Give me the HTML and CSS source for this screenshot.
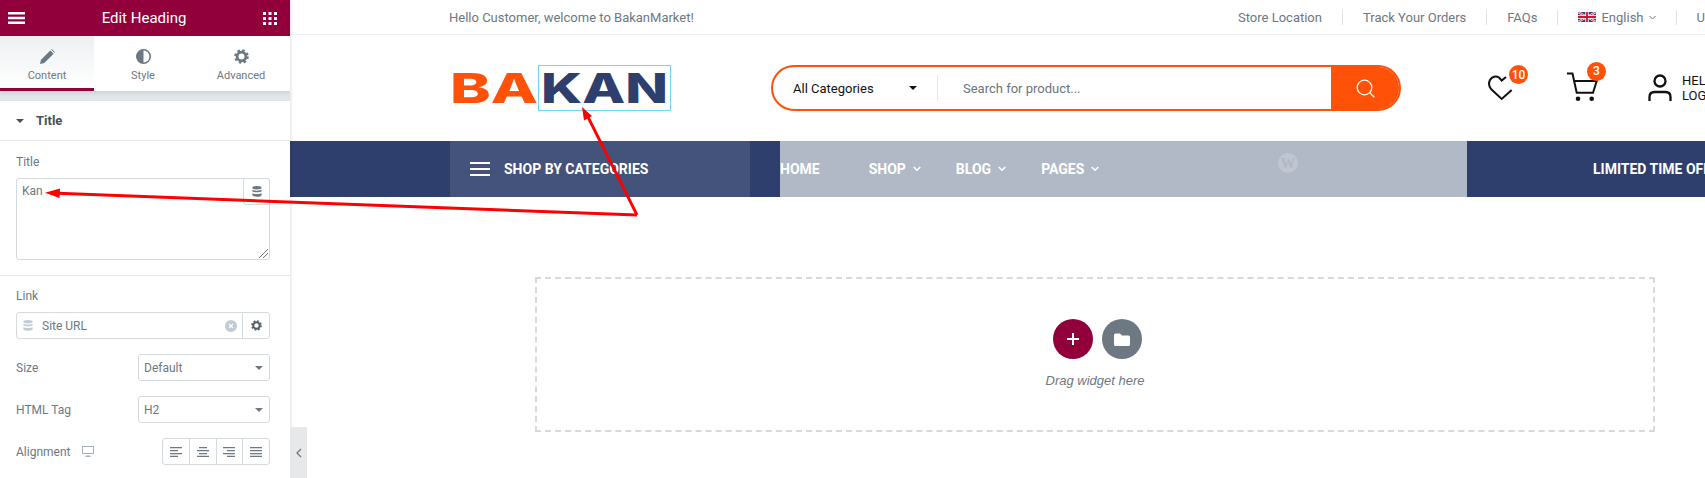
FILE: index.html
```html
<!DOCTYPE html>
<html lang="en">
<head>
  <meta charset="UTF-8" />
  <meta name="viewport" content="width=device-width, initial-scale=1" />
  <title>Edit Heading</title>
  <link rel="stylesheet" href="styles.css">
</head>
<body>

  <aside class="panel">
    <div class="panel-head">
      <svg class="head-icon" width="17" height="12" viewBox="0 0 17 12"><path d="M0 0h17v2.4H0zM0 4.8h17v2.4H0zM0 9.6h17V12H0z" fill="#fff"/></svg>
      <span>Edit Heading</span>
      <svg class="head-icon" width="14" height="13" viewBox="0 0 14 13" fill="#fff"><path d="M0 0h3v3H0zM5.5 0h3v3h-3zM11 0h3v3h-3zM0 5h3v3H0zM5.5 5h3v3h-3zM11 5h3v3h-3zM0 10h3v3H0zM5.5 10h3v3h-3zM11 10h3v3h-3z"/></svg>
    </div>

    <div class="tabs">
      <div class="tab active">
        <svg width="15" height="15" viewBox="0 0 15 15" fill="#6d7882"><path d="M0 15l1-4.3L10.3 1.4l3.3 3.3L4.3 14zM11.2.6l.6-.6 3.2 3.2-.6.6z"/></svg>
        <span>Content</span>
      </div>
      <div class="tab">
        <svg width="15" height="15" viewBox="0 0 15 15"><circle cx="7.5" cy="7.5" r="6.7" fill="#fff" stroke="#6d7882" stroke-width="1.6"/><path d="M7.5.8a6.7 6.7 0 0 0 0 13.4z" fill="#6d7882"/></svg>
        <span>Style</span>
      </div>
      <div class="tab">
        <svg width="15" height="15" viewBox="0 0 15 15"><circle cx="7.5" cy="7.5" r="4.4" fill="none" stroke="#6d7882" stroke-width="2.8"/><circle cx="7.5" cy="7.5" r="6" fill="none" stroke="#6d7882" stroke-width="2.6" stroke-dasharray="2.4 2.31"/></svg>
        <span>Advanced</span>
      </div>
    </div>
    <div class="band"></div>

    <div class="section-title"><i class="caret"></i>Title</div>

    <div class="group">
      <label class="field-label">Title</label>
      <div class="textarea">
        <span>Kan</span>
        <div class="dyn">
          <svg width="10" height="11" viewBox="0 0 10 11" fill="#6d7882"><ellipse cx="5" cy="1.7" rx="4.6" ry="1.7"/><path d="M.4 3.6C1.5 5 8.5 5 9.6 3.6v1.7C8.5 6.7 1.5 6.7.4 5.3zM.4 7c1.1 1.4 8.1 1.4 9.2 0v2.2c-1.1 2.1-8.1 2.1-9.2 0z"/></svg>
        </div>
        <svg class="grip" width="9" height="9" viewBox="0 0 9 9" stroke="#6d7882" stroke-width="1"><path d="M0 9L9 0M4 9l5-5"/></svg>
      </div>
    </div>

    <div class="group group-link">
      <label class="field-label">Link</label>
      <div class="url">
        <svg width="10" height="11" viewBox="0 0 10 11" fill="#c2cbd2"><ellipse cx="5" cy="1.7" rx="4.6" ry="1.7"/><path d="M.4 3.6C1.5 5 8.5 5 9.6 3.6v1.7C8.5 6.7 1.5 6.7.4 5.3zM.4 7c1.1 1.4 8.1 1.4 9.2 0v2.2c-1.1 2.1-8.1 2.1-9.2 0z"/></svg>
        <span class="url-text">Site URL</span>
        <svg width="12" height="12" viewBox="0 0 12 12"><circle cx="6" cy="6" r="6" fill="#c2cbd2"/><path d="M4 4l4 4M8 4l-4 4" stroke="#fff" stroke-width="1.2"/></svg>
        <div class="url-gear">
          <svg width="11" height="11" viewBox="0 0 15 15"><circle cx="7.5" cy="7.5" r="4.4" fill="none" stroke="#556068" stroke-width="2.8"/><circle cx="7.5" cy="7.5" r="6" fill="none" stroke="#556068" stroke-width="2.6" stroke-dasharray="2.4 2.31"/></svg>
        </div>
      </div>

      <div class="row">
        <span class="field-name">Size</span>
        <div class="select">Default<i class="caret"></i></div>
      </div>
      <div class="row">
        <span class="field-name">HTML Tag</span>
        <div class="select">H2<i class="caret"></i></div>
      </div>
      <div class="row">
        <span class="field-name">Alignment
          <svg class="device" width="12" height="11" viewBox="0 0 12 11" fill="#a4afb7"><path d="M0 0h12v8H0zM1 1v6h10V1zM3.5 9.5h5V11h-5z" fill-rule="evenodd"/></svg>
        </span>
        <div class="aligns">
          <div class="align"><svg width="12" height="10" viewBox="0 0 12 10" fill="#6d7882"><path d="M0 0h12v1.2H0zM0 3h8v1.2H0zM0 6h12v1.2H0zM0 8.8h8V10H0z"/></svg></div>
          <div class="align"><svg width="12" height="10" viewBox="0 0 12 10" fill="#6d7882"><path d="M0 8.8h12V10H0zM2 6h8v1.2H2zM0 3h12v1.2H0zM2 0h8v1.2H2z"/></svg></div>
          <div class="align"><svg width="12" height="10" viewBox="0 0 12 10" fill="#6d7882"><path d="M0 0h12v1.2H0zM4 3h8v1.2H4zM0 6h12v1.2H0zM4 8.8h8V10H4z"/></svg></div>
          <div class="align"><svg width="12" height="10" viewBox="0 0 12 10" fill="#6d7882"><path d="M0 0h12v1.2H0zM0 3h12v1.2H0zM0 6h12v1.2H0zM0 8.8h12V10H0z"/></svg></div>
        </div>
      </div>
    </div>
  </aside>

  <main class="site">
    <div class="topbar">
      <span class="welcome">Hello Customer, welcome to BakanMarket!</span>
      <div class="top-links">
        <a>Store Location</a>
        <a>Track Your Orders</a>
        <a>FAQs</a>
        <a class="lang">
          <svg width="18" height="10" viewBox="0 0 18 10">
            <rect width="18" height="10" fill="#2b3f87"/>
            <path d="M0 0l18 10M18 0L0 10" stroke="#fff" stroke-width="2"/>
            <path d="M0 0l18 10M18 0L0 10" stroke="#cf142b" stroke-width=".8"/>
            <path d="M9 0v10M0 5h18" stroke="#fff" stroke-width="3.4"/>
            <path d="M9 0v10M0 5h18" stroke="#cf142b" stroke-width="1.8"/>
          </svg>
          English
          <svg width="7" height="5" viewBox="0 0 7 5" fill="none" stroke="#6d7882"><path d="M.5 1l3 3 3-3"/></svg>
        </a>
        <a>USD</a>
      </div>
    </div>

    <header class="header">
      <svg class="logo" width="222" height="46" viewBox="0 0 222 46">
        <text x="-2" y="38" class="logo-text logo-ba" textLength="88" lengthAdjust="spacingAndGlyphs">BA</text>
        <text x="89" y="38" class="logo-text logo-kan" textLength="127" lengthAdjust="spacingAndGlyphs">KAN</text>
        <rect x="86.5" y=".5" width="132" height="45" fill="none" stroke="#71d7f7"/>
      </svg>

      <div class="search">
        <div class="search-cat">All Categories<i class="caret caret-dark"></i></div>
        <div class="search-input">Search for product...</div>
        <div class="search-btn">
          <svg width="19" height="19" viewBox="0 0 19 19" fill="none" stroke="#fff" stroke-width="1.3"><circle cx="8.5" cy="8.5" r="7.3"/><path d="M13.8 13.8l4.5 4.5"/></svg>
        </div>
      </div>

      <div class="actions">
        <div class="action action-heart">
          <svg width="26" height="26" viewBox="0 0 26 26" fill="none" stroke="#111" stroke-width="2"><path d="M18 2l-4.3 3.5L11 2.5C8 .5 4 1.5 2 5 .5 8 1 11.5 3 14l10.7 10 10-9"/></svg>
          <span class="badge">10</span>
        </div>
        <div class="action action-cart">
          <svg width="31" height="30" viewBox="0 0 31 30" fill="none" stroke="#111" stroke-width="2"><path d="M0 2.5h5.5L9.700 21.700H26L29.700 10H7.500"/><circle cx="11" cy="27.700" r="2.300" fill="#111" stroke="none"/><circle cx="24.700" cy="27.700" r="2.300" fill="#111" stroke="none"/></svg>
          <span class="badge">3</span>
        </div>
        <div class="action action-user">
          <svg width="24" height="28" viewBox="0 0 24 28" fill="none" stroke="#111" stroke-width="2.3"><circle cx="12" cy="7" r="5.5"/><path d="M1.500 27v-4c0-3 2-5 5-5h11c3 0 5 2 5 5v4"/></svg>
          <div class="user-text">HELLO<br>LOG IN</div>
        </div>
      </div>
    </header>

    <nav class="nav">
      <div class="nav-cats">
        <svg width="20" height="14" viewBox="0 0 20 14" fill="#fff"><path d="M0 0h20v2H0zM0 6h20v2H0zM0 12h20v2H0z"/></svg>
        SHOP BY CATEGORIES
      </div>
      <div class="nav-menu">
        <a class="nav-home">HOME</a>
        <a>SHOP<svg width="8" height="6" viewBox="0 0 8 6" fill="none" stroke="#fff" stroke-width="1.5"><path d="M.7 1L4 4.300 7.300 1"/></svg></a>
        <a>BLOG<svg width="8" height="6" viewBox="0 0 8 6" fill="none" stroke="#fff" stroke-width="1.5"><path d="M.7 1L4 4.300 7.300 1"/></svg></a>
        <a>PAGES<svg width="8" height="6" viewBox="0 0 8 6" fill="none" stroke="#fff" stroke-width="1.5"><path d="M.7 1L4 4.300 7.300 1"/></svg></a>
        <span class="wp-mark">W</span>
      </div>
      <div class="nav-promo">LIMITED TIME OFFER</div>
    </nav>

    <section class="drop">
      <div class="drop-buttons">
        <div class="drop-btn drop-add">
          <svg width="12" height="12" viewBox="0 0 12 12"><path d="M6 0v12M0 6h12" stroke="#fff" stroke-width="2"/></svg>
        </div>
        <div class="drop-btn drop-lib">
          <svg width="16" height="13" viewBox="0 0 16 13" fill="#fff"><path d="M0 2A1.500 1.500 0 0 1 1.500.5H6l2 2h6.500A1.500 1.500 0 0 1 16 4v7.500a1.500 1.500 0 0 1-1.500 1.500h-13A1.500 1.500 0 0 1 0 11.500z"/></svg>
        </div>
      </div>
      <p class="drop-text">Drag widget here</p>
    </section>
  </main>

  <div class="collapse">
    <svg width="6" height="10" viewBox="0 0 6 10" fill="none" stroke="#6d7882" stroke-width="1.3"><path d="M5 1L1 5l4 4"/></svg>
  </div>

  <svg class="arrows" width="1705" height="478" viewBox="0 0 1705 478">
    <path d="M637 215L58 193.300" fill="none" stroke="#f00" stroke-width="3"/>
    <path d="M45 192.700L60 188.500l-.5 9.500z" fill="#f00"/>
    <path d="M637 215L588 117" fill="none" stroke="#f00" stroke-width="2.800"/>
    <path d="M582 107l10 9-8 4.500z" fill="#f00"/>
  </svg>

</body>
</html>
```

FILE: styles.css
```css
:root {
  --crimson: #92003b;
  --navy: #2e3f6e;
  --orange: #ff5107;
  --panel-text: #6d7882;
  --panel-border: #d5dadf;
}

* {
  box-sizing: border-box;
}

html,
body {
  height: 100%;
}

body {
  margin: 0;
  display: flex;
  height: 478px;
  overflow: hidden;
  position: relative;
  background: #fff;
  font-family: Roboto, "Liberation Sans", sans-serif;
  color: var(--panel-text);
}

/* left editor panel */

.panel {
  flex: 0 0 290px;
  height: 478px;
  overflow: hidden;
  background: #fff;
  box-shadow: 1px 0 3px rgba(0, 0, 0, 0.12);
  position: relative;
  z-index: 2;
}

.panel-head {
  height: 36px;
  padding: 0 13px 0 8px;
  display: flex;
  align-items: center;
  justify-content: space-between;
  background: var(--crimson);
  color: #fff;
  font-size: 15px;
}

.tabs {
  display: flex;
  height: 55px;
  background: #fff;
  box-shadow: 0 2px 4px rgba(0, 0, 0, 0.1);
  position: relative;
}

.tab {
  flex: 0 0 98px;
  display: flex;
  flex-direction: column;
  align-items: center;
  padding-top: 13px;
  gap: 5px;
  font-size: 11px;
}

.tab.active {
  flex-basis: 94px;
  background: linear-gradient(#eef0f2, #fff);
  border-bottom: 3px solid var(--crimson);
}

.band {
  height: 10px;
  background: #e3e6e9;
}

.section-title {
  height: 40px;
  padding-left: 16px;
  display: flex;
  align-items: center;
  gap: 12px;
  font-size: 13px;
  font-weight: 700;
  color: #495157;
  border-bottom: 1px solid #e6e9ec;
}

.caret {
  display: block;
  width: 0;
  height: 0;
  border-left: 4px solid transparent;
  border-right: 4px solid transparent;
  border-top: 4px solid #495157;
}

.group {
  padding: 13px 20px 15px 16px;
  border-bottom: 1px solid #e6e9ec;
}

.group-link {
  padding-top: 12px;
  border-bottom: 0;
}

.field-label {
  display: block;
  height: 24px;
  font-size: 12px;
  line-height: 16px;
}

.textarea {
  height: 82px;
  position: relative;
  border: 1px solid var(--panel-border);
  border-radius: 3px;
  padding: 5px 5px;
  font-size: 12px;
}

.dyn {
  position: absolute;
  top: -1px;
  right: -1px;
  width: 27px;
  height: 27px;
  display: flex;
  align-items: center;
  justify-content: center;
  border: 1px solid var(--panel-border);
  border-radius: 0 3px 0 3px;
  background: #fff;
}

.grip {
  position: absolute;
  right: 1px;
  bottom: 1px;
}

.url {
  height: 27px;
  display: flex;
  align-items: center;
  padding-left: 6px;
  border: 1px solid var(--panel-border);
  border-radius: 3px;
  font-size: 12px;
}

.url-text {
  flex: 1;
  padding-left: 9px;
}

.url-gear {
  flex: 0 0 27px;
  height: 100%;
  margin-left: 5px;
  display: flex;
  align-items: center;
  justify-content: center;
  border-left: 1px solid var(--panel-border);
}

.row {
  display: flex;
  align-items: center;
  justify-content: space-between;
  height: 27px;
  margin-top: 15px;
  font-size: 12px;
}

.field-name {
  display: flex;
  align-items: center;
  gap: 12px;
}

.select {
  width: 132px;
  height: 27px;
  padding: 0 6px 0 5px;
  display: flex;
  align-items: center;
  justify-content: space-between;
  border: 1px solid var(--panel-border);
  border-radius: 3px;
}

.select .caret {
  border-top-color: var(--panel-text);
}

.aligns {
  width: 108px;
  height: 27px;
  display: flex;
  border: 1px solid var(--panel-border);
  border-radius: 3px;
}

.align {
  flex: 1;
  display: flex;
  align-items: center;
  justify-content: center;
  border-right: 1px solid var(--panel-border);
}

.align:last-child {
  border-right: 0;
}

.collapse {
  position: absolute;
  left: 290px;
  top: 427px;
  width: 17px;
  height: 51px;
  display: flex;
  align-items: center;
  justify-content: center;
  background: #e6e8ea;
  z-index: 2;
}

/* site preview */

.site {
  flex: 1;
  min-width: 0;
  overflow: hidden;
}

.topbar {
  height: 35px;
  padding-left: 159px;
  display: flex;
  align-items: center;
  border-bottom: 1px solid #eeeff1;
  font-size: 13px;
  white-space: nowrap;
}

.welcome {
  flex: 0 0 769px;
}

.top-links {
  display: flex;
  align-items: center;
}

.top-links a {
  display: flex;
  align-items: center;
  gap: 5px;
  height: 15px;
  padding: 0 20px;
  border-right: 1px solid #dfe1e4;
}

.top-links a:last-child {
  border-right: 0;
}

.header {
  height: 106px;
  padding-left: 162px;
  display: flex;
  align-items: center;
}

.logo {
  flex: 0 0 222px;
  margin-right: 97px;
  overflow: visible;
}

.logo-text {
  font-family: Inter, Roboto, sans-serif;
  font-size: 41px;
  font-weight: 800;
}

.logo-ba {
  fill: var(--orange);
}

.logo-kan {
  fill: var(--navy);
}

.search {
  flex: 0 0 630px;
  height: 46px;
  display: flex;
  align-items: center;
  border: 2px solid var(--orange);
  border-radius: 23px;
  overflow: hidden;
  font-size: 13px;
}

.search-cat {
  flex: 0 0 165px;
  height: 26px;
  padding: 0 20px;
  display: flex;
  align-items: center;
  justify-content: space-between;
  border-right: 1px solid #e4e6e8;
  color: #111;
}

.caret-dark {
  border-top-color: #111;
}

.search-input {
  flex: 1;
  padding-left: 25px;
  color: #6c757d;
}

.search-btn {
  flex: 0 0 68px;
  height: 46px;
  display: flex;
  align-items: center;
  justify-content: center;
  background: var(--orange);
}

.actions {
  display: flex;
  align-items: center;
  margin-left: 87px;
  white-space: nowrap;
}

.action {
  position: relative;
  display: flex;
  align-items: center;
}

.action-cart {
  margin: -5px 0 0 53px;
}

.action-user {
  margin-left: 50px;
  gap: 10px;
  color: #111;
  font-size: 13px;
  line-height: 15px;
}

.badge {
  position: absolute;
  left: 21px;
  top: -10px;
  width: 19px;
  height: 19px;
  display: flex;
  align-items: center;
  justify-content: center;
  border-radius: 50%;
  background: var(--orange);
  color: #fff;
  font-size: 12px;
  font-weight: 500;
}

.action-cart .badge {
  left: 20px;
  top: -9px;
}

.nav {
  height: 56px;
  display: flex;
  background: var(--navy);
  color: #fff;
  font-size: 14px;
  font-weight: 700;
  white-space: nowrap;
}

.nav-cats {
  flex: 0 0 300px;
  margin-left: 160px;
  padding-left: 20px;
  display: flex;
  align-items: center;
  gap: 14px;
  background: #43537c;
}

.nav-menu {
  flex: 0 0 687px;
  margin-left: 30px;
  position: relative;
  display: flex;
  align-items: center;
  gap: 35px;
  background: #b2b9c6;
}

.nav-menu a {
  display: flex;
  align-items: center;
  gap: 7px;
}

.nav-menu .nav-home {
  margin-right: 14px;
}

.wp-mark {
  position: absolute;
  left: 498px;
  top: 12px;
  width: 20px;
  height: 20px;
  display: flex;
  align-items: center;
  justify-content: center;
  border-radius: 50%;
  background: #c0c6d1;
  color: #b2b9c6;
  font-family: "Liberation Serif", serif;
  font-size: 15px;
}

.nav-promo {
  flex: 1;
  padding-left: 126px;
  display: flex;
  align-items: center;
}

.drop {
  width: 1120px;
  height: 155px;
  margin: 80px 0 0 245px;
  display: flex;
  flex-direction: column;
  align-items: center;
  padding-top: 40px;
  border: 2px dashed #d5dadf;
}

.drop-buttons {
  display: flex;
  gap: 9px;
  margin-left: 4px;
}

.drop-btn {
  width: 40px;
  height: 40px;
  display: flex;
  align-items: center;
  justify-content: center;
  border-radius: 50%;
}

.drop-add {
  background: var(--crimson);
}

.drop-lib {
  background: #6d7882;
}

.drop-text {
  margin: 14px 0 0;
  font-family: "Liberation Sans", sans-serif;
  font-size: 13px;
  font-style: italic;
  color: #6d7882;
}

/* annotation arrows drawn over the screenshot */

.arrows {
  position: absolute;
  left: 0;
  top: 0;
  z-index: 5;
  pointer-events: none;
}
```
